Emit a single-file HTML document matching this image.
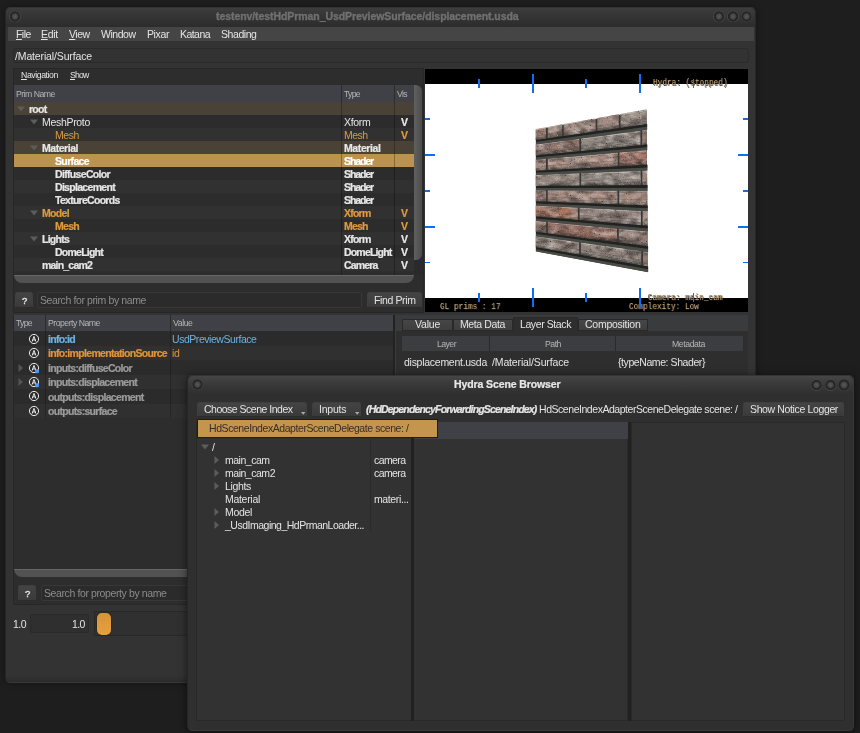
<!DOCTYPE html>
<html><head><meta charset="utf-8"><title>usdview</title>
<style>
*{box-sizing:border-box;margin:0;padding:0}
html,body{width:860px;height:733px;overflow:hidden;background:#1e1e1e}
body{font-family:"Liberation Sans",sans-serif;font-size:10.5px;color:#e4e4e4;position:relative}
.a{position:absolute}
.t{position:absolute;white-space:nowrap;line-height:13px;height:13px;will-change:transform}
.win{position:absolute;background:#2f2f2f;border-radius:5px;border:1px solid #383838;border-left-color:#262626;border-top-color:#343434}
.tb{position:absolute;left:0;right:0;top:0;height:19px;border-radius:5px 5px 0 0;background:linear-gradient(#454545,#3a3a3a 40%,#2e2e2e)}
.cb{position:absolute;width:11.6px;height:11.6px;border-radius:50%;background:radial-gradient(circle closest-side at 50% 50%,#585858 0%,#4a4a4a 36%,#3a3a3a 56%,#242424 68%,#262626 86%,#454545 100%)}
.btn{position:absolute;background:linear-gradient(#444,#3a3a3a);border:1px solid #3f3f3f;border-bottom-color:#2c2c2c;border-radius:2.5px}
.fld{position:absolute;background:#2b2b2b;border:1px solid #373737;border-radius:2px}
.hd{position:absolute;background:#3f4146}
.mono{will-change:transform;font-family:"Liberation Mono",monospace;color:#c8a676;position:absolute;white-space:nowrap;font-size:9.3px;line-height:11px;transform:scaleX(.836);transform-origin:0 50%;text-shadow:0.5px 0.5px 0 #1a1a1a,-0.4px 0 0 #333}
.tick{position:absolute;background:#0f6ef2}
</style></head><body>
<div class="win" style="left:5px;top:7px;width:751px;height:676px;background:linear-gradient(#333,#333 99%,#2b2b2b);border-right-color:#272727;box-shadow:0 0 6px rgba(0,0,0,.35)"><div class="tb" style="background:linear-gradient(#3d3d3d,#353535 40%,#2c2c2c)"></div><div class="cb" style="left:3.4px;top:2.5px"></div><div class="cb" style="left:707.2px;top:2.6px"></div><div class="cb" style="left:721.2px;top:2.6px"></div><div class="cb" style="left:734.9px;top:2.6px"></div></div>
<div class="t" style="left:216px;top:9.7px;font-size:10.5px;letter-spacing:-0.070px;font-weight:bold;-webkit-text-stroke:0.22px;color:#707070;-webkit-text-stroke:0.35px #707070;">testenv/testHdPrman_UsdPreviewSurface/displacement.usda</div><div class="a" style="left:8px;top:26.8px;width:745.8px;height:14.1px;background:#454545"></div>
<div class="t" style="left:15.5px;top:27.7px;font-size:10.5px;letter-spacing:-0.555px;"><u>F</u>ile</div><div class="t" style="left:41.2px;top:27.7px;font-size:10.5px;letter-spacing:-0.323px;"><u>E</u>dit</div><div class="t" style="left:68.8px;top:27.7px;font-size:10.5px;letter-spacing:-0.468px;"><u>V</u>iew</div><div class="t" style="left:101px;top:27.7px;font-size:10.5px;letter-spacing:-0.474px;">Window</div><div class="t" style="left:146.5px;top:27.7px;font-size:10.5px;letter-spacing:-0.385px;">Pixar</div><div class="t" style="left:179.5px;top:27.7px;font-size:10.5px;letter-spacing:-0.547px;">Katana</div><div class="t" style="left:221px;top:27.7px;font-size:10.5px;letter-spacing:-0.434px;">Shading</div>
<div class="fld" style="left:13px;top:48.3px;width:735.5px;height:15.2px;background:#323232;border-color:#2a2a2a;border-radius:3px"></div><div class="t" style="left:15px;top:49.5px;font-size:10.5px;letter-spacing:-0.139px;">/Material/Surface</div>
<div class="a" style="left:13px;top:68px;width:411px;height:245px;background:#2d2d2d;border:1px solid #272727"></div>
<div class="t" style="left:21.2px;top:69.4px;font-size:8.7px;letter-spacing:-0.411px;"><u>N</u>avigation</div><div class="t" style="left:69.5px;top:69.4px;font-size:8.7px;letter-spacing:-0.816px;"><u>S</u>how</div><div class="hd" style="left:14px;top:85.4px;width:400px;height:17px"></div><div class="a" style="left:341px;top:85px;width:1px;height:17px;background:#2c2c2c"></div><div class="a" style="left:394px;top:85px;width:1px;height:17px;background:#2c2c2c"></div><div class="t" style="left:15.5px;top:87.7px;font-size:8.7px;letter-spacing:-0.501px;color:#b6b6b6;">Prim Name</div><div class="t" style="left:344.2px;top:87.7px;font-size:8.7px;letter-spacing:-0.716px;color:#b6b6b6;">Type</div><div class="t" style="left:397px;top:87.7px;font-size:8.7px;letter-spacing:-0.643px;color:#b6b6b6;">Vis</div>
<div class="a" style="left:14px;top:102.4px;width:400px;height:13px;background:#4a4237"></div><svg class="a" style="left:17px;top:106.4px" width="8" height="6"><path d="M0 0.5H8L4 5.5Z" fill="#5c5c5c"/></svg><div class="t" style="left:29px;top:102.6px;font-size:10.5px;letter-spacing:-0.728px;font-weight:bold;-webkit-text-stroke:0.22px;color:#e6e6e6;">root</div>
<div class="a" style="left:14px;top:115.4px;width:400px;height:13px;background:#2c2c2c"></div><svg class="a" style="left:30px;top:119.4px" width="8" height="6"><path d="M0 0.5H8L4 5.5Z" fill="#5c5c5c"/></svg><div class="t" style="left:42px;top:115.6px;font-size:10.5px;letter-spacing:-0.308px;color:#e6e6e6;">MeshProto</div><div class="t" style="left:344px;top:115.6px;font-size:10.5px;letter-spacing:-0.301px;color:#e6e6e6;">Xform</div><div class="t" style="left:400.5px;top:115.6px;font-size:10.5px;letter-spacing:-0.804px;font-weight:bold;-webkit-text-stroke:0.22px;color:#e6e6e6;">V</div>
<div class="a" style="left:14px;top:128.4px;width:400px;height:13px;background:#313131"></div><div class="t" style="left:55px;top:128.6px;font-size:10.5px;letter-spacing:-0.419px;color:#de9a3e;">Mesh</div><div class="t" style="left:344px;top:128.6px;font-size:10.5px;letter-spacing:-0.544px;color:#de9a3e;">Mesh</div><div class="t" style="left:400.5px;top:128.6px;font-size:10.5px;letter-spacing:-0.804px;font-weight:bold;-webkit-text-stroke:0.22px;color:#de9a3e;">V</div>
<div class="a" style="left:14px;top:141.4px;width:400px;height:13px;background:#4a4237"></div><svg class="a" style="left:30px;top:145.4px" width="8" height="6"><path d="M0 0.5H8L4 5.5Z" fill="#5c5c5c"/></svg><div class="t" style="left:42px;top:141.6px;font-size:10.5px;letter-spacing:-0.460px;font-weight:bold;-webkit-text-stroke:0.22px;color:#e6e6e6;">Material</div><div class="t" style="left:344px;top:141.6px;font-size:10.5px;letter-spacing:-0.398px;font-weight:bold;-webkit-text-stroke:0.22px;color:#e6e6e6;">Material</div>
<div class="a" style="left:14px;top:154.4px;width:400px;height:13px;background:#ba934f"></div><div class="t" style="left:55px;top:154.6px;font-size:10.5px;letter-spacing:-0.646px;font-weight:bold;-webkit-text-stroke:0.22px;color:#ffffff;">Surface</div><div class="t" style="left:344px;top:154.6px;font-size:10.5px;letter-spacing:-1.100px;font-weight:bold;-webkit-text-stroke:0.22px;color:#ffffff;">Shader</div>
<div class="a" style="left:14px;top:167.4px;width:400px;height:13px;background:#2c2c2c"></div><div class="t" style="left:55px;top:167.6px;font-size:10.5px;letter-spacing:-0.667px;font-weight:bold;-webkit-text-stroke:0.22px;color:#e6e6e6;">DiffuseColor</div><div class="t" style="left:344px;top:167.6px;font-size:10.5px;letter-spacing:-1.100px;font-weight:bold;-webkit-text-stroke:0.22px;color:#e6e6e6;">Shader</div>
<div class="a" style="left:14px;top:180.4px;width:400px;height:13px;background:#313131"></div><div class="t" style="left:55px;top:180.6px;font-size:10.5px;letter-spacing:-0.690px;font-weight:bold;-webkit-text-stroke:0.22px;color:#e6e6e6;">Displacement</div><div class="t" style="left:344px;top:180.6px;font-size:10.5px;letter-spacing:-1.100px;font-weight:bold;-webkit-text-stroke:0.22px;color:#e6e6e6;">Shader</div>
<div class="a" style="left:14px;top:193.4px;width:400px;height:13px;background:#2c2c2c"></div><div class="t" style="left:55px;top:193.6px;font-size:10.5px;letter-spacing:-0.723px;font-weight:bold;-webkit-text-stroke:0.22px;color:#e6e6e6;">TextureCoords</div><div class="t" style="left:344px;top:193.6px;font-size:10.5px;letter-spacing:-1.100px;font-weight:bold;-webkit-text-stroke:0.22px;color:#e6e6e6;">Shader</div>
<div class="a" style="left:14px;top:206.4px;width:400px;height:13px;background:#313131"></div><svg class="a" style="left:30px;top:210.4px" width="8" height="6"><path d="M0 0.5H8L4 5.5Z" fill="#5c5c5c"/></svg><div class="t" style="left:42px;top:206.6px;font-size:10.5px;letter-spacing:-0.666px;font-weight:bold;-webkit-text-stroke:0.22px;color:#de9a3e;">Model</div><div class="t" style="left:344px;top:206.6px;font-size:10.5px;letter-spacing:-0.767px;font-weight:bold;-webkit-text-stroke:0.22px;color:#de9a3e;">Xform</div><div class="t" style="left:400.5px;top:206.6px;font-size:10.5px;letter-spacing:-0.804px;font-weight:bold;-webkit-text-stroke:0.22px;color:#de9a3e;">V</div>
<div class="a" style="left:14px;top:219.4px;width:400px;height:13px;background:#2c2c2c"></div><div class="t" style="left:55px;top:219.6px;font-size:10.5px;letter-spacing:-0.710px;font-weight:bold;-webkit-text-stroke:0.22px;color:#de9a3e;">Mesh</div><div class="t" style="left:344px;top:219.6px;font-size:10.5px;letter-spacing:-0.835px;font-weight:bold;-webkit-text-stroke:0.22px;color:#de9a3e;">Mesh</div><div class="t" style="left:400.5px;top:219.6px;font-size:10.5px;letter-spacing:-0.804px;font-weight:bold;-webkit-text-stroke:0.22px;color:#de9a3e;">V</div>
<div class="a" style="left:14px;top:232.4px;width:400px;height:13px;background:#313131"></div><svg class="a" style="left:30px;top:236.4px" width="8" height="6"><path d="M0 0.5H8L4 5.5Z" fill="#5c5c5c"/></svg><div class="t" style="left:42px;top:232.6px;font-size:10.5px;letter-spacing:-0.749px;font-weight:bold;-webkit-text-stroke:0.22px;color:#e6e6e6;">Lights</div><div class="t" style="left:344px;top:232.6px;font-size:10.5px;letter-spacing:-0.767px;font-weight:bold;-webkit-text-stroke:0.22px;color:#e6e6e6;">Xform</div><div class="t" style="left:400.5px;top:232.6px;font-size:10.5px;letter-spacing:-0.804px;font-weight:bold;-webkit-text-stroke:0.22px;color:#e6e6e6;">V</div>
<div class="a" style="left:14px;top:245.4px;width:400px;height:13px;background:#2c2c2c"></div><div class="t" style="left:55px;top:245.6px;font-size:10.5px;letter-spacing:-0.759px;font-weight:bold;-webkit-text-stroke:0.22px;color:#e6e6e6;">DomeLight</div><div class="t" style="left:344px;top:245.6px;font-size:10.5px;letter-spacing:-0.814px;font-weight:bold;-webkit-text-stroke:0.22px;color:#e6e6e6;">DomeLight</div><div class="t" style="left:400.5px;top:245.6px;font-size:10.5px;letter-spacing:-0.804px;font-weight:bold;-webkit-text-stroke:0.22px;color:#e6e6e6;">V</div>
<div class="a" style="left:14px;top:258.4px;width:400px;height:13px;background:#313131"></div><div class="t" style="left:42px;top:258.6px;font-size:10.5px;letter-spacing:-0.800px;font-weight:bold;-webkit-text-stroke:0.22px;color:#e6e6e6;">main_cam2</div><div class="t" style="left:344px;top:258.6px;font-size:10.5px;letter-spacing:-0.837px;font-weight:bold;-webkit-text-stroke:0.22px;color:#e6e6e6;">Camera</div><div class="t" style="left:400.5px;top:258.6px;font-size:10.5px;letter-spacing:-0.804px;font-weight:bold;-webkit-text-stroke:0.22px;color:#e6e6e6;">V</div>
<div class="a" style="left:341px;top:102px;width:1px;height:173px;background:rgba(0,0,0,.28)"></div><div class="a" style="left:394px;top:102px;width:1px;height:173px;background:rgba(0,0,0,.28)"></div>
<div class="a" style="left:414px;top:85.4px;width:9px;height:190px;background:#2a2a2a"></div><div class="a" style="left:414px;top:85.4px;width:8px;height:175px;background:linear-gradient(90deg,#606060,#4c4c4c);border-radius:0 6px 6px 0"></div>
<div class="a" style="left:14px;top:275px;width:400px;height:8px;background:#525252;border-top:1px solid #666;border-radius:0 0 8px 8px"></div>
<div class="btn" style="left:15px;top:292px;width:18px;height:16px"></div><div class="t" style="left:21.5px;top:293.9px;font-size:9.5px;letter-spacing:0.000px;-webkit-text-stroke:0.35px;">?</div><div class="fld" style="left:37px;top:292px;width:325px;height:16px"></div><div class="t" style="left:40px;top:293.9px;font-size:10.5px;letter-spacing:-0.390px;color:#8c8c8c;">Search for prim by name</div><div class="btn" style="left:367px;top:292px;width:55px;height:16px"></div><div class="t" style="left:374px;top:293.9px;font-size:10.5px;letter-spacing:-0.380px;">Find Prim</div>
<div class="a" style="left:425.4px;top:69px;width:322.4px;height:242.9px;background:#000;overflow:hidden"><div class="a" style="left:0;top:14.5px;width:323px;height:214.4px;background:#fff"></div><svg class="a" style="left:0;top:0" width="323" height="243" viewBox="0 0 323 243"><defs><filter id="nz" x="0" y="0" width="100%" height="100%" color-interpolation-filters="sRGB"><feTurbulence type="fractalNoise" baseFrequency="0.75" numOctaves="3" seed="11" result="n"/><feColorMatrix in="n" type="matrix" values="0 0 0 0 0.14  0 0 0 0 0.12  0 0 0 0 0.11  0 0 0 4 -2.75" result="dk"/><feComposite in="dk" in2="SourceGraphic" operator="in" result="dks"/><feTurbulence type="fractalNoise" baseFrequency="0.9" numOctaves="2" seed="29" result="n2"/><feColorMatrix in="n2" type="matrix" values="0 0 0 0 0.93  0 0 0 0 0.92  0 0 0 0 0.9  0 0 0 1.2 -0.68" result="lt"/><feComposite in="lt" in2="SourceGraphic" operator="in" result="lts"/><feTurbulence type="fractalNoise" baseFrequency="0.09 0.16" numOctaves="2" seed="5" result="n3"/><feColorMatrix in="n3" type="matrix" values="0 0 0 0 0.16  0 0 0 0 0.14  0 0 0 0 0.13  1.5 0 0 0 -0.6" result="bd"/><feComposite in="bd" in2="SourceGraphic" operator="in" result="bds"/><feColorMatrix in="n3" type="matrix" values="0 0 0 0 0.95  0 0 0 0 0.93  0 0 0 0 0.9  0 1.2 0 0 -0.54" result="bw"/><feComposite in="bw" in2="SourceGraphic" operator="in" result="bws"/><feMerge><feMergeNode in="SourceGraphic"/><feMergeNode in="bds"/><feMergeNode in="bws"/><feMergeNode in="lts"/><feMergeNode in="dks"/></feMerge></filter><filter id="bl" x="-5%" y="-5%" width="110%" height="110%"><feGaussianBlur stdDeviation="0.55"/></filter></defs><g filter="url(#bl)"><polygon points="110.8,60.5 221.6,41.0 222.8,203.0 110.8,182.3" fill="#363834"/><g filter="url(#nz)"><polygon points="110.8,60.0 121.0,58.2 121.0,59.7 110.8,61.5" fill="#bca49b"/><polygon points="110.8,61.3 121.0,59.6 121.0,65.2 110.8,66.8" fill="#a5877d"/><polygon points="110.8,66.7 121.0,65.1 121.0,67.5 110.8,69.0" fill="#987d74"/><polygon points="110.8,68.9 121.0,67.4 121.0,68.9 110.8,70.4" fill="#836c65"/><polygon points="110.8,70.2 121.0,68.7 121.0,69.8 110.8,71.3" fill="#685852"/><polygon points="122.8,57.9 137.1,55.3 137.1,56.9 122.8,59.4" fill="#b8a69d"/><polygon points="122.8,59.3 137.1,56.8 137.1,62.7 122.8,64.9" fill="#a08980"/><polygon points="122.8,64.8 137.1,62.5 137.1,65.1 122.8,67.2" fill="#947f77"/><polygon points="122.8,67.1 137.1,64.9 137.1,66.5 122.8,68.6" fill="#7f6e67"/><polygon points="122.8,68.5 137.1,66.4 137.1,67.5 122.8,69.5" fill="#655853"/><polygon points="138.8,55.0 170.5,49.4 170.5,51.1 138.8,56.6" fill="#bca8a0"/><polygon points="138.8,56.5 170.5,51.0 170.6,57.4 138.8,62.4" fill="#a68d84"/><polygon points="138.8,62.3 170.6,57.2 170.6,60.0 138.9,64.8" fill="#99837a"/><polygon points="138.9,64.7 170.6,59.9 170.6,61.6 138.9,66.2" fill="#83716a"/><polygon points="138.9,66.1 170.6,61.4 170.6,62.6 138.9,67.2" fill="#685a55"/><polygon points="172.3,49.1 193.8,45.2 193.8,47.1 172.3,50.8" fill="#b7a59d"/><polygon points="172.3,50.6 193.8,46.9 193.8,53.7 172.3,57.1" fill="#9f887f"/><polygon points="172.3,57.0 193.8,53.6 193.9,56.5 172.3,59.7" fill="#937e76"/><polygon points="172.3,59.6 193.9,56.4 193.9,58.2 172.4,61.3" fill="#7e6d66"/><polygon points="172.3,61.2 193.9,58.0 193.9,59.3 172.4,62.4" fill="#645852"/><polygon points="195.6,44.9 221.6,40.3 221.6,42.2 195.6,46.8" fill="#b2a69f"/><polygon points="195.6,46.6 221.6,42.1 221.7,49.3 195.6,53.4" fill="#978982"/><polygon points="195.6,53.3 221.7,49.2 221.7,52.3 195.6,56.2" fill="#8c7f79"/><polygon points="195.6,56.1 221.7,52.1 221.7,54.1 195.6,57.9" fill="#786e68"/><polygon points="195.6,57.8 221.7,53.9 221.7,55.3 195.6,59.0" fill="#605854"/><polygon points="110.8,75.3 154.3,69.5 154.3,71.2 110.8,76.7" fill="#aa958d"/><polygon points="110.8,76.6 154.3,71.1 154.3,77.2 110.8,82.1" fill="#8c7168"/><polygon points="110.8,82.0 154.3,77.1 154.3,79.7 110.8,84.3" fill="#826a62"/><polygon points="110.8,84.2 154.3,79.6 154.3,81.2 110.8,85.6" fill="#715d56"/><polygon points="110.8,85.5 154.3,81.1 154.3,82.3 110.8,86.5" fill="#5b4c47"/><polygon points="156.1,69.3 215.3,61.5 215.3,63.4 156.1,71.0" fill="#b2a8a2"/><polygon points="156.1,70.8 215.3,63.2 215.4,70.4 156.1,77.0" fill="#978d87"/><polygon points="156.1,76.9 215.4,70.2 215.4,73.3 156.1,79.6" fill="#8c837d"/><polygon points="156.1,79.4 215.4,73.2 215.4,75.1 156.1,81.1" fill="#78716c"/><polygon points="156.1,80.9 215.4,74.9 215.4,76.2 156.1,82.1" fill="#605a56"/><polygon points="217.1,61.3 221.8,60.6 221.8,62.6 217.1,63.2" fill="#af9a92"/><polygon points="217.1,63.0 221.8,62.4 221.8,69.7 217.2,70.2" fill="#93786f"/><polygon points="217.2,70.0 221.8,69.5 221.8,72.6 217.2,73.1" fill="#887068"/><polygon points="217.2,73.0 221.8,72.5 221.9,74.4 217.2,74.9" fill="#76625b"/><polygon points="217.2,74.7 221.9,74.3 221.9,75.6 217.2,76.1" fill="#5e504a"/><polygon points="110.8,90.6 121.0,89.7 121.0,91.2 110.8,92.0" fill="#bca49b"/><polygon points="110.8,91.9 121.0,91.1 121.0,96.7 110.8,97.4" fill="#a6877d"/><polygon points="110.8,97.3 121.0,96.6 121.0,99.0 110.8,99.6" fill="#997d74"/><polygon points="110.8,99.5 121.0,98.9 121.0,100.4 110.8,100.9" fill="#836c65"/><polygon points="110.8,100.8 121.0,100.2 121.0,101.3 110.8,101.8" fill="#685852"/><polygon points="122.8,89.5 192.7,83.5 192.7,85.3 122.8,91.0" fill="#bfa89f"/><polygon points="122.8,90.9 192.7,85.2 192.7,92.0 122.8,96.6" fill="#aa8d82"/><polygon points="122.8,96.5 192.7,91.8 192.7,94.7 122.8,98.9" fill="#9d8379"/><polygon points="122.8,98.8 192.7,94.6 192.8,96.4 122.8,100.3" fill="#867168"/><polygon points="122.8,100.1 192.8,96.2 192.8,97.5 122.8,101.2" fill="#6a5a54"/><polygon points="194.5,83.3 221.9,81.0 221.9,82.9 194.5,85.2" fill="#bc988d"/><polygon points="194.5,85.0 221.9,82.8 222.0,90.0 194.5,91.8" fill="#a57569"/><polygon points="194.5,91.7 222.0,89.9 222.0,93.0 194.5,94.6" fill="#986d63"/><polygon points="194.5,94.5 222.0,92.8 222.0,94.8 194.5,96.3" fill="#835f56"/><polygon points="194.5,96.1 222.0,94.6 222.0,95.9 194.5,97.4" fill="#684e48"/><polygon points="110.8,105.9 154.4,104.1 154.4,105.7 110.8,107.3" fill="#b2a59f"/><polygon points="110.8,107.2 154.4,105.6 154.4,111.8 110.8,112.7" fill="#978882"/><polygon points="110.8,112.5 154.4,111.6 154.4,114.3 110.8,114.9" fill="#8c7e79"/><polygon points="110.8,114.8 154.4,114.1 154.4,115.8 110.8,116.2" fill="#786d68"/><polygon points="110.8,116.1 154.4,115.6 154.5,116.8 110.8,117.1" fill="#605854"/><polygon points="156.2,104.0 215.6,101.6 215.6,103.5 156.2,105.7" fill="#b0a6a0"/><polygon points="156.2,105.5 215.6,103.3 215.7,110.5 156.2,111.7" fill="#958a84"/><polygon points="156.2,111.6 215.7,110.3 215.7,113.4 156.2,114.2" fill="#8a807a"/><polygon points="156.2,114.1 215.7,113.3 215.7,115.2 156.2,115.8" fill="#776f6a"/><polygon points="156.2,115.6 215.7,115.0 215.7,116.3 156.2,116.8" fill="#605955"/><polygon points="217.4,101.5 222.1,101.3 222.1,103.3 217.4,103.4" fill="#b8a299"/><polygon points="217.4,103.3 222.1,103.1 222.1,110.4 217.4,110.5" fill="#a0847a"/><polygon points="217.4,110.3 222.1,110.2 222.1,113.3 217.5,113.4" fill="#947b71"/><polygon points="217.5,113.2 222.1,113.2 222.2,115.1 217.5,115.1" fill="#7f6a62"/><polygon points="217.5,115.0 222.2,114.9 222.2,116.3 217.5,116.3" fill="#655650"/><polygon points="110.8,121.2 121.0,121.2 121.1,122.7 110.8,122.6" fill="#bba39b"/><polygon points="110.8,122.5 121.1,122.6 121.1,128.2 110.8,127.9" fill="#a4867d"/><polygon points="110.8,127.8 121.1,128.1 121.1,130.5 110.8,130.2" fill="#977c74"/><polygon points="110.8,130.1 121.1,130.4 121.1,131.9 110.8,131.5" fill="#826c65"/><polygon points="110.8,131.4 121.1,131.7 121.1,132.8 110.8,132.4" fill="#675752"/><polygon points="122.8,121.2 192.3,121.5 192.4,123.3 122.8,122.7" fill="#bca69d"/><polygon points="122.8,122.6 192.4,123.2 192.4,130.0 122.8,128.2" fill="#a68a80"/><polygon points="122.8,128.1 192.4,129.8 192.4,132.7 122.8,130.6" fill="#998077"/><polygon points="122.8,130.4 192.4,132.6 192.4,134.4 122.8,131.9" fill="#836f67"/><polygon points="122.8,131.8 192.4,134.2 192.4,135.5 122.8,132.9" fill="#685953"/><polygon points="194.1,121.5 222.2,121.6 222.2,123.6 194.1,123.3" fill="#bba59b"/><polygon points="194.1,123.2 222.2,123.4 222.3,130.7 194.2,130.0" fill="#a4887d"/><polygon points="194.2,129.9 222.3,130.5 222.3,133.7 194.2,132.8" fill="#977e74"/><polygon points="194.2,132.6 222.3,133.5 222.3,135.4 194.2,134.4" fill="#826d65"/><polygon points="194.2,134.3 222.3,135.3 222.3,136.6 194.2,135.6" fill="#675852"/><polygon points="110.8,136.4 152.9,138.5 152.9,140.2 110.8,137.9" fill="#bd9584"/><polygon points="110.8,137.8 152.9,140.0 152.9,146.2 110.8,143.2" fill="#a7715b"/><polygon points="110.8,143.1 152.9,146.0 152.9,148.7 110.8,145.5" fill="#9a6a56"/><polygon points="110.8,145.3 152.9,148.5 152.9,150.2 110.8,146.8" fill="#845d4c"/><polygon points="110.8,146.7 152.9,150.0 152.9,151.2 110.8,147.7" fill="#684c40"/><polygon points="154.6,138.6 215.9,141.7 215.9,143.6 154.6,140.3" fill="#b2a39e"/><polygon points="154.6,140.1 215.9,143.4 215.9,150.6 154.7,146.3" fill="#978681"/><polygon points="154.7,146.2 215.9,150.4 216.0,153.5 154.7,148.8" fill="#8c7c78"/><polygon points="154.7,148.7 216.0,153.3 216.0,155.3 154.7,150.3" fill="#786c68"/><polygon points="154.7,150.2 216.0,155.1 216.0,156.4 154.7,151.3" fill="#605754"/><polygon points="217.7,141.8 222.4,142.0 222.4,143.9 217.7,143.7" fill="#b49e97"/><polygon points="217.7,143.5 222.4,143.8 222.4,151.0 217.7,150.7" fill="#9a7f77"/><polygon points="217.7,150.5 222.4,150.9 222.4,154.0 217.7,153.6" fill="#8e766f"/><polygon points="217.7,153.5 222.4,153.8 222.5,155.8 217.8,155.4" fill="#7b6760"/><polygon points="217.8,155.2 222.5,155.6 222.5,157.0 217.8,156.6" fill="#62544e"/><polygon points="110.8,151.7 121.1,152.7 121.1,154.2 110.8,153.2" fill="#b79e95"/><polygon points="110.8,153.1 121.1,154.1 121.1,159.7 110.8,158.5" fill="#9f7e74"/><polygon points="110.8,158.4 121.1,159.6 121.1,162.0 110.8,160.8" fill="#93756c"/><polygon points="110.8,160.6 121.1,161.9 121.1,163.4 110.8,162.1" fill="#7e665e"/><polygon points="110.8,162.0 121.1,163.3 121.1,164.3 110.8,163.0" fill="#64534d"/><polygon points="122.9,152.9 192.0,159.4 192.0,161.2 122.9,154.4" fill="#b19288"/><polygon points="122.9,154.3 192.0,161.1 192.1,167.9 122.9,159.9" fill="#966d61"/><polygon points="122.9,159.8 192.1,167.7 192.1,170.6 122.9,162.2" fill="#8b665b"/><polygon points="122.9,162.1 192.1,170.5 192.1,172.3 122.9,163.6" fill="#785a50"/><polygon points="122.9,163.5 192.1,172.1 192.1,173.4 122.9,164.5" fill="#604a44"/><polygon points="193.8,159.6 222.5,162.3 222.5,164.3 193.8,161.4" fill="#af9e96"/><polygon points="193.8,161.3 222.5,164.1 222.6,171.4 193.8,168.1" fill="#937e76"/><polygon points="193.8,167.9 222.6,171.2 222.6,174.3 193.9,170.8" fill="#88756e"/><polygon points="193.9,170.7 222.6,174.2 222.6,176.1 193.9,172.5" fill="#766660"/><polygon points="193.9,172.4 222.6,175.9 222.6,177.3 193.9,173.6" fill="#5e534e"/><polygon points="110.8,167.0 154.1,173.1 154.1,174.7 110.8,168.5" fill="#afa29b"/><polygon points="110.8,168.3 154.1,174.6 154.1,180.7 110.8,173.8" fill="#93847d"/><polygon points="110.8,173.7 154.1,180.6 154.1,183.2 110.8,176.0" fill="#887b74"/><polygon points="110.8,175.9 154.1,183.1 154.1,184.8 110.8,177.4" fill="#766a65"/><polygon points="110.8,177.3 154.1,184.6 154.1,185.8 110.8,178.3" fill="#5e5652"/><polygon points="155.9,173.3 216.2,181.8 216.2,183.7 155.9,175.0" fill="#a99e98"/><polygon points="155.9,174.8 216.2,183.5 216.2,190.7 155.9,181.0" fill="#8b7f78"/><polygon points="155.9,180.9 216.2,190.5 216.2,193.6 155.9,183.5" fill="#817670"/><polygon points="155.9,183.4 216.2,193.4 216.3,195.3 155.9,185.1" fill="#706761"/><polygon points="155.9,184.9 216.3,195.2 216.3,196.5 155.9,186.1" fill="#5a544f"/><polygon points="218.0,182.0 222.7,182.7 222.7,184.6 218.0,183.9" fill="#af9d96"/><polygon points="218.0,183.8 222.7,184.4 222.7,191.7 218.0,191.0" fill="#937d75"/><polygon points="218.0,190.8 222.7,191.5 222.7,194.7 218.0,193.9" fill="#88746d"/><polygon points="218.0,193.7 222.7,194.5 222.8,196.4 218.0,195.6" fill="#76655f"/><polygon points="218.0,195.5 222.8,196.3 222.8,197.6 218.1,196.8" fill="#5e524e"/></g><polygon points="111.2,71.1 222.2,55.0 222.2,58.0 111.2,73.3" fill="#222421"/><polygon points="111.2,73.1 222.2,57.8 222.2,60.7 111.2,75.4" fill="#484b46"/><polygon points="111.2,86.4 222.3,75.4 222.3,78.3 111.2,88.6" fill="#222421"/><polygon points="111.2,88.5 222.3,78.2 222.3,81.1 111.2,90.7" fill="#484b46"/><polygon points="111.2,101.7 222.5,95.8 222.5,98.7 111.2,103.9" fill="#222421"/><polygon points="111.2,103.8 222.5,98.5 222.5,101.5 111.2,106.0" fill="#484b46"/><polygon points="111.2,117.0 222.6,116.1 222.6,119.0 111.2,119.2" fill="#222421"/><polygon points="111.2,119.1 222.6,118.9 222.6,121.8 111.2,121.3" fill="#484b46"/><polygon points="111.2,132.3 222.8,136.5 222.8,139.4 111.2,134.5" fill="#222421"/><polygon points="111.2,134.4 222.8,139.2 222.8,142.2 111.2,136.6" fill="#484b46"/><polygon points="111.2,147.6 222.9,156.8 222.9,159.8 111.2,149.8" fill="#222421"/><polygon points="111.2,149.7 222.9,159.6 222.9,162.5 111.2,151.9" fill="#484b46"/><polygon points="111.2,162.9 223.1,177.2 223.1,180.1 111.2,165.1" fill="#222421"/><polygon points="111.2,165.0 223.1,180.0 223.1,182.9 111.2,167.2" fill="#484b46"/><polygon points="111.2,178.2 223.2,197.5 223.2,200.5 111.2,180.4" fill="#222421"/><polygon points="111.2,180.3 223.2,200.3 223.2,203.2 111.2,182.5" fill="#484b46"/></g></svg><div class="mono" style="left:227.20000000000005px;top:7.599999999999994px">Hydra: (stopped)</div><div class="mono" style="left:223.0px;top:222.5px">Camera: main_cam</div><div class="mono" style="left:203.80000000000007px;top:232px">Complexity: Low</div><div class="mono" style="left:14.600000000000023px;top:232px">GL prims : 17</div><div class="tick" style="left:52.70px;top:10.0px;width:1.8px;height:9px"></div><div class="tick" style="left:52.70px;top:224.0px;width:1.8px;height:9px"></div><div class="tick" style="left:106.40px;top:5.0px;width:1.8px;height:19px"></div><div class="tick" style="left:106.40px;top:219.0px;width:1.8px;height:19px"></div><div class="tick" style="left:160.10px;top:10.0px;width:1.8px;height:9px"></div><div class="tick" style="left:160.10px;top:224.0px;width:1.8px;height:9px"></div><div class="tick" style="left:213.70px;top:5.0px;width:1.8px;height:19px"></div><div class="tick" style="left:213.70px;top:219.0px;width:1.8px;height:19px"></div><div class="tick" style="left:267.30px;top:10.0px;width:1.8px;height:9px"></div><div class="tick" style="left:267.30px;top:224.0px;width:1.8px;height:9px"></div><div class="tick" style="left:0;top:49.30px;width:5px;height:1.8px"></div><div class="tick" style="right:0;top:49.30px;width:5px;height:1.8px"></div><div class="tick" style="left:0;top:85.20px;width:10px;height:1.8px"></div><div class="tick" style="right:0;top:85.20px;width:10px;height:1.8px"></div><div class="tick" style="left:0;top:121.00px;width:5px;height:1.8px"></div><div class="tick" style="right:0;top:121.00px;width:5px;height:1.8px"></div><div class="tick" style="left:0;top:156.80px;width:10px;height:1.8px"></div><div class="tick" style="right:0;top:156.80px;width:10px;height:1.8px"></div><div class="tick" style="left:0;top:192.60px;width:5px;height:1.8px"></div><div class="tick" style="right:0;top:192.60px;width:5px;height:1.8px"></div></div>
<div class="a" style="left:13px;top:315px;width:381px;height:290px;background:#2d2d2d;border:1px solid #272727;border-top:none"></div><div class="hd" style="left:14px;top:315px;width:379px;height:16px"></div><div class="a" style="left:45px;top:315px;width:1px;height:16px;background:#2c2c2c"></div><div class="a" style="left:170px;top:315px;width:1px;height:16px;background:#2c2c2c"></div><div class="t" style="left:16px;top:317.2px;font-size:8.7px;letter-spacing:-0.716px;color:#b6b6b6;">Type</div><div class="t" style="left:47.8px;top:317.2px;font-size:8.7px;letter-spacing:-0.500px;color:#b6b6b6;">Property Name</div><div class="t" style="left:172.5px;top:317.2px;font-size:8.7px;letter-spacing:-0.421px;color:#b6b6b6;">Value</div>
<div class="a" style="left:14px;top:331.5px;width:379px;height:14.5px;background:#2b2b2b"></div><svg class="a" style="left:28px;top:332.7px" width="13" height="13" viewBox="0 0 13 13"><circle cx="6" cy="6" r="4.6" fill="none" stroke="#e8e8e8" stroke-width="1"/><path d="M4.1 8.6L6 3.4L7.9 8.6M4.8 6.9H7.2" fill="none" stroke="#e8e8e8" stroke-width="1"/></svg><div class="t" style="left:47.8px;top:333px;font-size:10.5px;letter-spacing:-0.724px;font-weight:bold;-webkit-text-stroke:0.22px;color:#6ab4e4;">info:id</div><div class="t" style="left:171.9px;top:333px;font-size:10.5px;letter-spacing:-0.453px;color:#6ab4e4;">UsdPreviewSurface</div>
<div class="a" style="left:14px;top:345.9px;width:379px;height:14.5px;background:#303030"></div><svg class="a" style="left:28px;top:347.1px" width="13" height="13" viewBox="0 0 13 13"><circle cx="6" cy="6" r="4.6" fill="none" stroke="#e8e8e8" stroke-width="1"/><path d="M4.1 8.6L6 3.4L7.9 8.6M4.8 6.9H7.2" fill="none" stroke="#e8e8e8" stroke-width="1"/></svg><div class="t" style="left:47.8px;top:347.4px;font-size:10.5px;letter-spacing:-0.677px;font-weight:bold;-webkit-text-stroke:0.22px;color:#e0943a;">info:implementationSource</div><div class="t" style="left:171.9px;top:347.4px;font-size:10.5px;letter-spacing:-0.336px;color:#e0943a;">id</div>
<div class="a" style="left:14px;top:360.3px;width:379px;height:14.5px;background:#2b2b2b"></div><svg class="a" style="left:18px;top:363.5px" width="6" height="8"><path d="M0.5 0L5 4L0.5 8Z" fill="#555"/></svg><svg class="a" style="left:28px;top:361.5px" width="13" height="13" viewBox="0 0 13 13"><circle cx="6" cy="6" r="4.6" fill="none" stroke="#e8e8e8" stroke-width="1"/><path d="M4.1 8.6L6 3.4L7.9 8.6M4.8 6.9H7.2" fill="none" stroke="#e8e8e8" stroke-width="1"/><rect x="7" y="7.2" width="4" height="4" rx="1.2" fill="#4a98f4"/></svg><div class="t" style="left:47.8px;top:361.8px;font-size:10.5px;letter-spacing:-0.675px;font-weight:bold;-webkit-text-stroke:0.22px;color:#9b9b9b;">inputs:diffuseColor</div>
<div class="a" style="left:14px;top:374.7px;width:379px;height:14.5px;background:#303030"></div><svg class="a" style="left:18px;top:377.9px" width="6" height="8"><path d="M0.5 0L5 4L0.5 8Z" fill="#555"/></svg><svg class="a" style="left:28px;top:375.9px" width="13" height="13" viewBox="0 0 13 13"><circle cx="6" cy="6" r="4.6" fill="none" stroke="#e8e8e8" stroke-width="1"/><path d="M4.1 8.6L6 3.4L7.9 8.6M4.8 6.9H7.2" fill="none" stroke="#e8e8e8" stroke-width="1"/><rect x="7" y="7.2" width="4" height="4" rx="1.2" fill="#4a98f4"/></svg><div class="t" style="left:47.8px;top:376.2px;font-size:10.5px;letter-spacing:-0.690px;font-weight:bold;-webkit-text-stroke:0.22px;color:#9b9b9b;">inputs:displacement</div>
<div class="a" style="left:14px;top:389.1px;width:379px;height:14.5px;background:#2b2b2b"></div><svg class="a" style="left:28px;top:390.3px" width="13" height="13" viewBox="0 0 13 13"><circle cx="6" cy="6" r="4.6" fill="none" stroke="#e8e8e8" stroke-width="1"/><path d="M4.1 8.6L6 3.4L7.9 8.6M4.8 6.9H7.2" fill="none" stroke="#e8e8e8" stroke-width="1"/></svg><div class="t" style="left:47.8px;top:390.6px;font-size:10.5px;letter-spacing:-0.680px;font-weight:bold;-webkit-text-stroke:0.22px;color:#9b9b9b;">outputs:displacement</div>
<div class="a" style="left:14px;top:403.5px;width:379px;height:14.5px;background:#303030"></div><svg class="a" style="left:28px;top:404.7px" width="13" height="13" viewBox="0 0 13 13"><circle cx="6" cy="6" r="4.6" fill="none" stroke="#e8e8e8" stroke-width="1"/><path d="M4.1 8.6L6 3.4L7.9 8.6M4.8 6.9H7.2" fill="none" stroke="#e8e8e8" stroke-width="1"/></svg><div class="t" style="left:47.8px;top:405px;font-size:10.5px;letter-spacing:-0.690px;font-weight:bold;-webkit-text-stroke:0.22px;color:#9b9b9b;">outputs:surface</div>
<div class="a" style="left:45px;top:331px;width:1px;height:87px;background:rgba(0,0,0,.2)"></div><div class="a" style="left:170px;top:331px;width:1px;height:87px;background:rgba(0,0,0,.2)"></div><div class="a" style="left:14px;top:569px;width:379px;height:8px;background:#525252;border-top:1px solid #666;border-radius:0 0 8px 8px"></div>
<div class="btn" style="left:18px;top:585px;width:18px;height:16px"></div><div class="t" style="left:24.5px;top:587.1px;font-size:9.5px;letter-spacing:0.000px;-webkit-text-stroke:0.35px;">?</div><div class="fld" style="left:41px;top:585px;width:348px;height:16px"></div><div class="t" style="left:43.5px;top:587.1px;font-size:10.5px;letter-spacing:-0.391px;color:#8c8c8c;">Search for property by name</div>
<div class="t" style="left:13px;top:618.2px;font-size:10.5px;letter-spacing:-0.532px;">1.0</div><div class="fld" style="left:30.3px;top:613.8px;width:58.4px;height:19.6px;background:#2f2f2f;border-color:#292929"></div><div class="t" style="left:72px;top:618.2px;font-size:10.5px;letter-spacing:-0.632px;">1.0</div><div class="a" style="left:94px;top:611px;width:650px;height:25px;background:#303030;border:1px solid #282828"></div><div class="a" style="left:97px;top:613px;width:14px;height:22px;background:linear-gradient(#d5943b,#e8a03c);border-radius:5px;box-shadow:0 0 0 0.6px #2a2418"></div>
<div class="a" style="left:393px;top:315px;width:3px;height:290px;background:#222"></div><div class="a" style="left:395px;top:315.4px;width:352.5px;height:290px;background:#3a3b3d"></div><div class="a" style="left:396px;top:330.6px;width:351.5px;height:274px;background:#2e2e2e"></div><div class="a" style="left:512.5px;top:316.5px;width:65px;height:15px;background:#2e2e2e;border:1px solid #2a2a2a;border-bottom:none"></div><div class="btn" style="left:402px;top:318.5px;width:50.5px;height:12.5px;background:linear-gradient(#464646,#3e3e3e);border-color:#292929;border-radius:0"></div><div class="t" style="left:415px;top:318.2px;font-size:10.5px;letter-spacing:-0.215px;">Value</div><div class="btn" style="left:452.5px;top:318.5px;width:60px;height:12.5px;background:linear-gradient(#464646,#3e3e3e);border-color:#292929;border-radius:0"></div><div class="t" style="left:460px;top:318.2px;font-size:10.5px;letter-spacing:-0.382px;">Meta Data</div><div class="t" style="left:519.7px;top:318.2px;font-size:10.5px;letter-spacing:-0.404px;">Layer Stack</div><div class="btn" style="left:577.5px;top:318.5px;width:70.5px;height:12.5px;background:linear-gradient(#464646,#3e3e3e);border-color:#292929;border-radius:0"></div><div class="t" style="left:585px;top:318.2px;font-size:10.5px;letter-spacing:-0.260px;">Composition</div>
<div class="hd" style="left:402px;top:336px;width:341px;height:15px;background:#3b3d41"></div><div class="a" style="left:489px;top:336px;width:1px;height:15px;background:#2a2a2a"></div><div class="a" style="left:615px;top:336px;width:1px;height:15px;background:#2a2a2a"></div><div class="t" style="left:436.5px;top:337.5px;font-size:8.7px;letter-spacing:-0.553px;color:#b6b6b6;">Layer</div><div class="t" style="left:545px;top:337.5px;font-size:8.7px;letter-spacing:-0.474px;color:#b6b6b6;">Path</div><div class="t" style="left:671.5px;top:337.5px;font-size:8.7px;letter-spacing:-0.409px;color:#b6b6b6;">Metadata</div><div class="t" style="left:404px;top:356.2px;font-size:10.5px;letter-spacing:-0.268px;">displacement.usda</div><div class="t" style="left:492px;top:356.2px;font-size:10.5px;letter-spacing:-0.139px;">/Material/Surface</div><div class="t" style="left:618px;top:356.2px;font-size:10.5px;letter-spacing:-0.420px;">{typeName: Shader}</div>
<div class="win" style="left:186.8px;top:375.3px;width:666.8px;height:356.2px;box-shadow:0 1px 9px rgba(0,0,0,.55)"><div class="tb"></div><div class="cb" style="left:3.8px;top:2.3px"></div><div class="cb" style="left:623px;top:2.7px"></div><div class="cb" style="left:636.8px;top:2.7px"></div><div class="cb" style="left:650.5px;top:2.7px"></div></div>
<div class="t" style="left:453.5px;top:378.2px;font-size:10.5px;letter-spacing:-0.108px;font-weight:bold;-webkit-text-stroke:0.22px;color:#e8e8e8;">Hydra Scene Browser</div><div class="btn" style="left:197px;top:402px;width:110px;height:15px"></div><div class="t" style="left:203.7px;top:403px;font-size:10.5px;letter-spacing:-0.499px;">Choose Scene Index</div><div class="btn" style="left:312px;top:402px;width:49px;height:15px"></div><div class="t" style="left:319px;top:403px;font-size:10.5px;letter-spacing:-0.217px;">Inputs</div><svg class="a" style="left:301px;top:411.5px" width="5" height="3"><path d="M0 0H4.4L2.2 2.8Z" fill="#aaa"/></svg><svg class="a" style="left:354.8px;top:411.5px" width="5" height="3"><path d="M0 0H4.4L2.2 2.8Z" fill="#aaa"/></svg><div class="t" style="left:365.5px;top:403px;font-size:10.5px;letter-spacing:-0.837px;font-weight:bold;-webkit-text-stroke:0.22px;font-style:italic;">(HdDependencyForwardingSceneIndex)</div><div class="t" style="left:539px;top:403px;font-size:10.5px;letter-spacing:-0.455px;">HdSceneIndexAdapterSceneDelegate scene: /</div><div class="btn" style="left:743px;top:402px;width:101px;height:15px"></div><div class="t" style="left:749.5px;top:403px;font-size:10.5px;letter-spacing:-0.364px;">Show Notice Logger</div>
<div class="a" style="left:196.4px;top:422.4px;width:215.6px;height:298.2px;background:#323232;border:1px solid #292929"></div><div class="a" style="left:413px;top:422.4px;width:215px;height:298.2px;background:#323232;border:1px solid #292929"></div><div class="a" style="left:413px;top:422.4px;width:215px;height:16.8px;background:#3f4146"></div><div class="a" style="left:628px;top:422.4px;width:3px;height:298.2px;background:#212121"></div><div class="a" style="left:631px;top:422.4px;width:213.8px;height:298.2px;background:#323232;border:1px solid #292929"></div><div class="a" style="left:410.8px;top:422.4px;width:2.8px;height:298.2px;background:#212121"></div><div class="a" style="left:370px;top:439px;width:1px;height:92px;background:#2a2a2a"></div>
<div class="a" style="left:196.5px;top:418.6px;width:241.5px;height:19.6px;background:#c4954d;border:1px solid #1c1c1c;border-bottom-width:1.5px"></div><div class="t" style="left:208.7px;top:421.7px;font-size:10.5px;letter-spacing:-0.431px;color:#382f22;">HdSceneIndexAdapterSceneDelegate scene: /</div>
<svg class="a" style="left:201px;top:444.4px" width="8" height="6"><path d="M0 0.5H8L4 5.5Z" fill="#5c5c5c"/></svg><div class="t" style="left:212px;top:440.6px;font-size:10.5px;letter-spacing:-0.417px;">/</div><svg class="a" style="left:214px;top:456.4px" width="6" height="8"><path d="M0.5 0L5 4L0.5 8Z" fill="#5c5c5c"/></svg><div class="t" style="left:225px;top:453.6px;font-size:10.5px;letter-spacing:-0.492px;">main_cam</div><div class="t" style="left:373.5px;top:453.6px;font-size:10.5px;letter-spacing:-0.586px;">camera</div><svg class="a" style="left:214px;top:469.4px" width="6" height="8"><path d="M0.5 0L5 4L0.5 8Z" fill="#5c5c5c"/></svg><div class="t" style="left:225px;top:466.6px;font-size:10.5px;letter-spacing:-0.475px;">main_cam2</div><div class="t" style="left:373.5px;top:466.6px;font-size:10.5px;letter-spacing:-0.586px;">camera</div><svg class="a" style="left:214px;top:482.4px" width="6" height="8"><path d="M0.5 0L5 4L0.5 8Z" fill="#5c5c5c"/></svg><div class="t" style="left:225px;top:479.6px;font-size:10.5px;letter-spacing:-0.337px;">Lights</div><div class="t" style="left:225px;top:492.6px;font-size:10.5px;letter-spacing:-0.293px;">Material</div><div class="t" style="left:373.5px;top:492.6px;font-size:10.5px;letter-spacing:-0.381px;">materi...</div><svg class="a" style="left:214px;top:508.4px" width="6" height="8"><path d="M0.5 0L5 4L0.5 8Z" fill="#5c5c5c"/></svg><div class="t" style="left:225px;top:505.6px;font-size:10.5px;letter-spacing:-0.320px;">Model</div><svg class="a" style="left:214px;top:521.4px" width="6" height="8"><path d="M0.5 0L5 4L0.5 8Z" fill="#5c5c5c"/></svg><div class="t" style="left:225px;top:518.6px;font-size:10.5px;letter-spacing:-0.497px;">_UsdImaging_HdPrmanLoader...</div>
</body></html>
